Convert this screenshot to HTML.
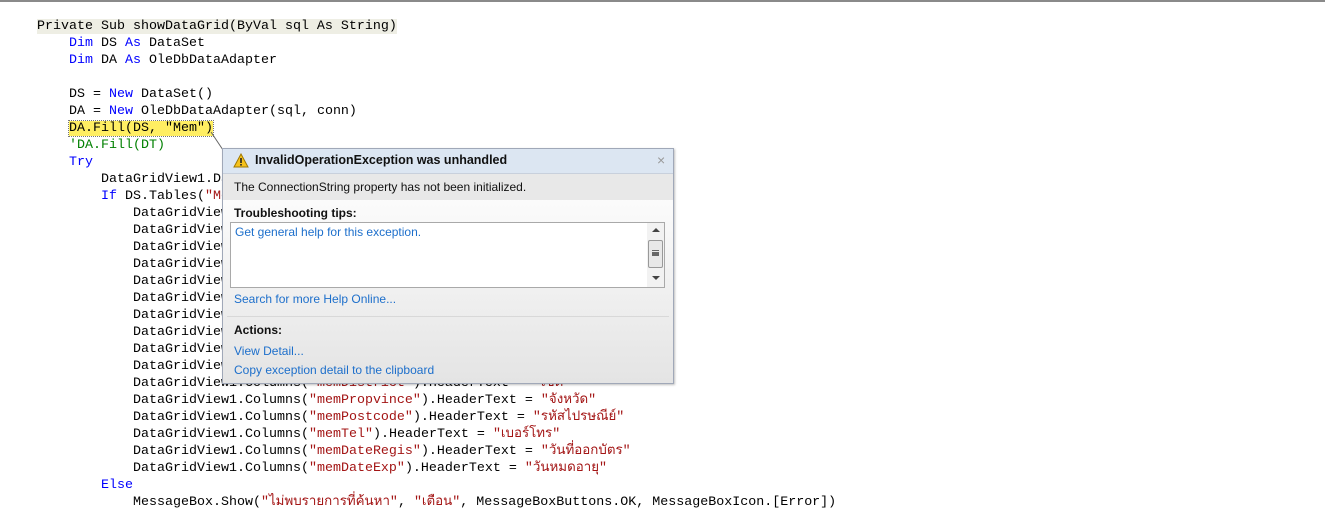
<!DOCTYPE html>
<html><head><meta charset="utf-8"><style>
body{margin:0;width:1325px;height:510px;background:#fff;overflow:hidden;position:relative;font-family:"Liberation Mono",monospace;}
.top{position:absolute;left:0;top:0;width:1325px;height:2px;background:#8a8a8a;}
.code{position:absolute;left:37px;top:18px;font-size:13.33px;line-height:17px;white-space:pre;color:#000;}
.k{color:#0000ff}.s{color:#a31515}.c{color:#008000}
.hl1{background:#eeeee4}
.hl2{background:#ffee62;outline:1px dotted #777;}
.pop{position:absolute;left:222px;top:148px;width:450px;height:234px;border:1px solid #a0a8b8;background:linear-gradient(#fff 0,#fff 10%,#e4e4e4 100%);font-family:"Liberation Sans",sans-serif;font-size:12px;box-shadow:1px 1px 2px rgba(0,0,0,.25);}
.hd{height:24px;background:#dce6f2;border-bottom:1px solid #c8d0dc;position:relative;}
.hd b{position:absolute;left:32px;top:4px;font-size:12.5px;color:#111}
.msg{height:26px;background:#e8e8e8;padding-left:11px;line-height:26px;color:#111}
.lnk{color:#1d6fcb}
.ab{position:absolute;}
</style></head><body>
<div class="top"></div>
<div class="code"><span class="hl1">Private Sub showDataGrid(ByVal sql As String)</span>
    <span class="k">Dim</span> DS <span class="k">As</span> DataSet
    <span class="k">Dim</span> DA <span class="k">As</span> OleDbDataAdapter

    DS = <span class="k">New</span> DataSet()
    DA = <span class="k">New</span> OleDbDataAdapter(sql, conn)
    <span class="hl2">DA.Fill(DS, "Mem")</span>
    <span class="c">'DA.Fill(DT)</span>
    <span class="k">Try</span>
        DataGridView1.DataSource = DS.Tables(<span class="s">"Mem"</span>)
        <span class="k">If</span> DS.Tables(<span class="s">"Mem"</span>).Rows.Count &gt; 0 <span class="k">Then</span>
            DataGridView1.Columns(<span class="s">"memID"</span>).HeaderText = <span class="s">"รหัส"</span>
            DataGridView1.Columns(<span class="s">"memName"</span>).HeaderText = <span class="s">"ชื่อ"</span>
            DataGridView1.Columns(<span class="s">"memLast"</span>).HeaderText = <span class="s">"สกุล"</span>
            DataGridView1.Columns(<span class="s">"memSex"</span>).HeaderText = <span class="s">"เพศ"</span>
            DataGridView1.Columns(<span class="s">"memBirth"</span>).HeaderText = <span class="s">"วันเกิด"</span>
            DataGridView1.Columns(<span class="s">"memAddr"</span>).HeaderText = <span class="s">"ที่อยู่"</span>
            DataGridView1.Columns(<span class="s">"memMoo"</span>).HeaderText = <span class="s">"หมู่"</span>
            DataGridView1.Columns(<span class="s">"memRoad"</span>).HeaderText = <span class="s">"ถนน"</span>
            DataGridView1.Columns(<span class="s">"memSoi"</span>).HeaderText = <span class="s">"ซอย"</span>
            DataGridView1.Columns(<span class="s">"memTambon"</span>).HeaderText = <span class="s">"ตำบล"</span>
            DataGridView1.Columns(<span class="s">"memDistrict"</span>).HeaderText = <span class="s">"เขต"</span>
            DataGridView1.Columns(<span class="s">"memPropvince"</span>).HeaderText = <span class="s">"จังหวัด"</span>
            DataGridView1.Columns(<span class="s">"memPostcode"</span>).HeaderText = <span class="s">"รหัสไปรษณีย์"</span>
            DataGridView1.Columns(<span class="s">"memTel"</span>).HeaderText = <span class="s">"เบอร์โทร"</span>
            DataGridView1.Columns(<span class="s">"memDateRegis"</span>).HeaderText = <span class="s">"วันที่ออกบัตร"</span>
            DataGridView1.Columns(<span class="s">"memDateExp"</span>).HeaderText = <span class="s">"วันหมดอายุ"</span>
        <span class="k">Else</span>
            MessageBox.Show(<span class="s">"ไม่พบรายการที่ค้นหา"</span>, <span class="s">"เตือน"</span>, MessageBoxButtons.OK, MessageBoxIcon.[Error])</div>
<svg class="ab" style="left:210px;top:131px" width="16" height="22"><line x1="1" y1="1" x2="13" y2="19" stroke="#666" stroke-width="1"/></svg>
<div class="pop">
 <div class="hd">
  <svg class="ab" style="left:10px;top:4px" width="16" height="15"><polygon points="8,1 15,14 1,14" fill="#f6c21c" stroke="#a07800"/><rect x="7.2" y="5" width="1.6" height="5" fill="#222"/><rect x="7.2" y="11" width="1.6" height="1.6" fill="#222"/></svg>
  <b>InvalidOperationException was unhandled</b>
  <span class="ab" style="left:434px;top:3px;color:#999;font-size:14px">×</span>
 </div>
 <div class="msg">The ConnectionString property has not been initialized.</div>
 <div class="ab" style="left:11px;top:57px;font-weight:bold;color:#111">Troubleshooting tips:</div>
 <div class="ab" style="left:7px;top:73px;width:433px;height:64px;background:#fff;border:1px solid #a9a9a9;">
   <div class="ab lnk" style="left:4px;top:2px">Get general help for this exception.</div>
   <div class="ab" style="right:0;top:0;width:17px;height:64px;background:#f2f2f2;">
     <div class="ab" style="left:5px;top:5px;width:0;height:0;border-left:4px solid transparent;border-right:4px solid transparent;border-bottom:4px solid #444"></div>
     <div class="ab" style="left:1px;top:17px;width:13px;height:26px;background:#e8e8e8;border:1px solid #999;border-radius:2px"><div style="margin:9px 3px;height:1px;border-top:1px solid #666;border-bottom:1px solid #666;box-shadow:0 3px 0 #666"></div></div>
     <div class="ab" style="left:5px;top:53px;width:0;height:0;border-left:4px solid transparent;border-right:4px solid transparent;border-top:4px solid #444"></div>
   </div>
 </div>
 <div class="ab lnk" style="left:11px;top:143px">Search for more Help Online...</div>
 <div class="ab" style="left:4px;top:167px;width:442px;height:1px;background:#d8d8d8"></div>
 <div class="ab" style="left:11px;top:174px;font-weight:bold;color:#111">Actions:</div>
 <div class="ab lnk" style="left:11px;top:195px">View Detail...</div>
 <div class="ab lnk" style="left:11px;top:214px">Copy exception detail to the clipboard</div>
</div>
</body></html>
